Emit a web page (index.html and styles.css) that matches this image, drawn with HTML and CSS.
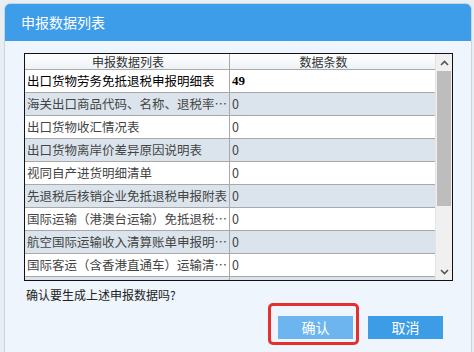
FILE: index.html
```html
<!DOCTYPE html>
<html lang="zh-CN">

<head>
    <meta charset="UTF-8">
    <title>申报数据列表</title>
    <link rel="stylesheet" href="styles.css">
</head>

<body>

    <div class="dialog">
        <div class="dialog-title">申报数据列表</div>

        <div class="dialog-body">
            <!-- Data list with scrollbar -->
            <div class="grid-box">
                <div class="grid">
                    <div class="grid-head">
                        <div class="cell name">申报数据列表</div>
                        <div class="cell count">数据条数</div>
                    </div>
                    <div class="grid-rows">
                        <div class="row active">
                            <div class="cell name">出口货物劳务免抵退税申报明细表</div>
                            <div class="cell count">49</div>
                        </div>
                        <div class="row">
                            <div class="cell name">海关出口商品代码、名称、退税率调整对应表</div>
                            <div class="cell count">0</div>
                        </div>
                        <div class="row">
                            <div class="cell name">出口货物收汇情况表</div>
                            <div class="cell count">0</div>
                        </div>
                        <div class="row">
                            <div class="cell name">出口货物离岸价差异原因说明表</div>
                            <div class="cell count">0</div>
                        </div>
                        <div class="row">
                            <div class="cell name">视同自产进货明细清单</div>
                            <div class="cell count">0</div>
                        </div>
                        <div class="row">
                            <div class="cell name">先退税后核销企业免抵退税申报附表</div>
                            <div class="cell count">0</div>
                        </div>
                        <div class="row">
                            <div class="cell name">国际运输（港澳台运输）免抵退税申报明细表</div>
                            <div class="cell count">0</div>
                        </div>
                        <div class="row">
                            <div class="cell name">航空国际运输收入清算账单申报明细表</div>
                            <div class="cell count">0</div>
                        </div>
                        <div class="row">
                            <div class="cell name">国际客运（含香港直通车）运输清算函件明细表</div>
                            <div class="cell count">0</div>
                        </div>
                        <div class="row">
                            <div class="cell name">国际货物运输代理服务明细表</div>
                            <div class="cell count">0</div>
                        </div>
                    </div>
                </div>

                <div class="scrollbar">
                    <div class="scroll-btn">
                        <svg width="9" height="6" viewBox="0 0 9 6"><path d="M1 5 L4.5 1.5 L8 5" fill="none" stroke="#555" stroke-width="1.6"/></svg>
                    </div>
                    <div class="scroll-track">
                        <div class="scroll-thumb"></div>
                    </div>
                    <div class="scroll-btn">
                        <svg width="9" height="6" viewBox="0 0 9 6"><path d="M1 1 L4.5 4.5 L8 1" fill="none" stroke="#555" stroke-width="1.6"/></svg>
                    </div>
                </div>
            </div>

            <p class="question">确认要生成上述申报数据吗?</p>

            <div class="actions">
                <div class="btn-wrap">
                    <button class="btn btn-light">确认</button>
                    <span class="mark"></span>
                </div>
                <button class="btn">取消</button>
            </div>
        </div>
    </div>

</body>

</html>
```

FILE: styles.css
```css
* {
    margin: 0;
    padding: 0;
    box-sizing: border-box;
}

body {
    font-family: "Noto Sans CJK SC", "Microsoft YaHei", sans-serif;
    background-color: #e9eef2;
    color: #333;
    overflow: hidden;
}

/* Dialog frame */
.dialog {
    margin: 3px 2px 0 4px;
    width: 468px;
    height: 360px;
    background-color: #eef5fc;
    border: 1px solid #c9d6e2;
    border-radius: 6px 6px 0 0;
    overflow: hidden;
}

.dialog-title {
    height: 37px;
    background-color: #3d9de8;
    color: white;
    font-size: 14px;
    line-height: 37px;
    padding-left: 16px;
}

.dialog-body {
    padding: 12px 0 0 19px;
}

/* Grid */
.grid-box {
    width: 429px;
    height: 228px;
    border: 1px solid #111;
    display: flex;
    background-color: white;
}

.grid {
    width: 410px;
    overflow: hidden;
}

.grid-head {
    display: flex;
    height: 16px;
    border-bottom: 1px solid #a9a9a9;
    background: linear-gradient(#ffffff, #eef2f6);
    font-size: 12px;
    line-height: 15px;
    color: #333;
}

.grid-head .cell {
    text-align: center;
}

.grid-head .count {
    padding-right: 20px;
}

.row {
    display: flex;
    height: 23px;
    border-bottom: 1px solid #a9a9a9;
    font-size: 12.5px;
    line-height: 22px;
    color: #444;
}

.row:nth-child(even) {
    background-color: #dbe4ec;
}

.row.active {
    color: #000;
}

.row.active .count {
    font-weight: bold;
    font-family: "Liberation Serif", serif;
    font-size: 13px;
}

.cell {
    overflow: hidden;
    white-space: nowrap;
    text-overflow: ellipsis;
}

.cell.name {
    width: 205px;
    padding-left: 2px;
    border-right: 1px solid #a9a9a9;
}

.cell.count {
    flex: 1;
    padding-left: 2px;
}

/* Scrollbar */
.scrollbar {
    width: 17px;
    display: flex;
    flex-direction: column;
    background-color: #f0f0f0;
    border-left: 1px solid #e4e4e4;
}

.scroll-btn {
    height: 17px;
    display: flex;
    align-items: center;
    justify-content: center;
}

.scroll-track {
    flex: 1;
    padding: 0 1px;
}

.scroll-thumb {
    height: 135px;
    background-color: #bdbdbd;
}

.question {
    font-size: 12px;
    line-height: 18px;
    margin: 5px 0 0 2px;
    color: #222;
}

/* Buttons */
.actions {
    display: flex;
    justify-content: flex-end;
    gap: 15px;
    margin: 12px 28px 0 0;
}

.btn-wrap {
    position: relative;
    display: flex;
}

.btn {
    width: 75px;
    height: 23px;
    border: none;
    background-color: #3c9de6;
    color: white;
    font-family: inherit;
    font-size: 14px;
    line-height: 23px;
}

.btn-light {
    background-color: #6cb5ef;
}

.mark {
    position: absolute;
    top: -13px;
    left: -10px;
    right: -6px;
    bottom: -6px;
    border: 3px solid #e5302d;
    border-radius: 5px;
}
```
